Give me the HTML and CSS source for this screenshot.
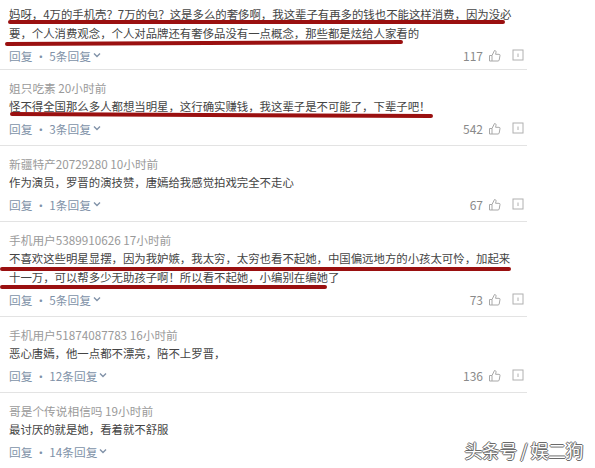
FILE: index.html
```html
<!DOCTYPE html>
<html lang="zh-CN">
<head>
  <meta charset="UTF-8" />
  <meta name="viewport" content="width=device-width, initial-scale=1.0"/>
  <title>评论</title>
  <link rel="stylesheet" href="styles.css">
</head>
<body>
  <div id="comment-list">

    <div class="comment comment-first">
      <p class="text">妈呀，4万的手机壳？7万的包？这是多么的奢侈啊，我这辈子有再多的钱也不能这样消费，因为没必<br>要，个人消费观念，个人对品牌还有奢侈品没有一点概念，那些都是炫给人家看的<i class="mark m1a"></i><i class="mark m1b"></i></p>
      <div class="foot">
        <span class="reply">回复 · 5条回复<svg class="chev" width="8" height="6" viewBox="0 0 8 6"><path d="M1 1.5 L4 4.5 L7 1.5" /></svg></span>
        <span class="stats">117<svg class="thumb" width="13" height="13" viewBox="0 0 13 13"><path d="M1.5 6.5h2.5v5.5H1.5z M4 6.5 L6.5 1.5 C7.6 1.5 8.2 2.2 8 3.2 L7.6 5.3 H11 C11.7 5.3 12.1 5.9 12 6.5 L11.2 11 C11.1 11.6 10.6 12 10 12 H4" /></svg><svg class="report" width="12" height="12" viewBox="0 0 12 12"><rect x="1" y="1" width="10" height="10" /><path d="M6 4.5v3.5" /></svg></span>
      </div>
    </div>

    <div class="comment">
      <div class="meta">姐只吃素 20小时前</div>
      <p class="text">怪不得全国那么多人都想当明星，这行确实赚钱，我这辈子是不可能了，下辈子吧！<i class="mark m2"></i></p>
      <div class="foot">
        <span class="reply">回复 · 3条回复<svg class="chev" width="8" height="6" viewBox="0 0 8 6"><path d="M1 1.5 L4 4.5 L7 1.5" /></svg></span>
        <span class="stats">542<svg class="thumb" width="13" height="13" viewBox="0 0 13 13"><path d="M1.5 6.5h2.5v5.5H1.5z M4 6.5 L6.5 1.5 C7.6 1.5 8.2 2.2 8 3.2 L7.6 5.3 H11 C11.7 5.3 12.1 5.9 12 6.5 L11.2 11 C11.1 11.6 10.6 12 10 12 H4" /></svg><svg class="report" width="12" height="12" viewBox="0 0 12 12"><rect x="1" y="1" width="10" height="10" /><path d="M6 4.5v3.5" /></svg></span>
      </div>
    </div>

    <div class="comment">
      <div class="meta">新疆特产20729280 10小时前</div>
      <p class="text">作为演员，罗晋的演技赞，唐嫣给我感觉拍戏完全不走心</p>
      <div class="foot">
        <span class="reply">回复 · 1条回复<svg class="chev" width="8" height="6" viewBox="0 0 8 6"><path d="M1 1.5 L4 4.5 L7 1.5" /></svg></span>
        <span class="stats">67<svg class="thumb" width="13" height="13" viewBox="0 0 13 13"><path d="M1.5 6.5h2.5v5.5H1.5z M4 6.5 L6.5 1.5 C7.6 1.5 8.2 2.2 8 3.2 L7.6 5.3 H11 C11.7 5.3 12.1 5.9 12 6.5 L11.2 11 C11.1 11.6 10.6 12 10 12 H4" /></svg><svg class="report" width="12" height="12" viewBox="0 0 12 12"><rect x="1" y="1" width="10" height="10" /><path d="M6 4.5v3.5" /></svg></span>
      </div>
    </div>

    <div class="comment">
      <div class="meta">手机用户5389910626 17小时前</div>
      <p class="text">不喜欢这些明星显摆，因为我妒嫉，我太穷，太穷也看不起她，中国偏远地方的小孩太可怜，加起来<br>十一万，可以帮多少无助孩子啊！所以看不起她，小编别在编她了<i class="mark m4a"></i><i class="mark m4b"></i></p>
      <div class="foot">
        <span class="reply">回复 · 5条回复<svg class="chev" width="8" height="6" viewBox="0 0 8 6"><path d="M1 1.5 L4 4.5 L7 1.5" /></svg></span>
        <span class="stats">73<svg class="thumb" width="13" height="13" viewBox="0 0 13 13"><path d="M1.5 6.5h2.5v5.5H1.5z M4 6.5 L6.5 1.5 C7.6 1.5 8.2 2.2 8 3.2 L7.6 5.3 H11 C11.7 5.3 12.1 5.9 12 6.5 L11.2 11 C11.1 11.6 10.6 12 10 12 H4" /></svg><svg class="report" width="12" height="12" viewBox="0 0 12 12"><rect x="1" y="1" width="10" height="10" /><path d="M6 4.5v3.5" /></svg></span>
      </div>
    </div>

    <div class="comment">
      <div class="meta">手机用户51874087783 16小时前</div>
      <p class="text">恶心唐嫣，他一点都不漂亮，陪不上罗晋，</p>
      <div class="foot">
        <span class="reply">回复 · 12条回复<svg class="chev" width="8" height="6" viewBox="0 0 8 6"><path d="M1 1.5 L4 4.5 L7 1.5" /></svg></span>
        <span class="stats">136<svg class="thumb" width="13" height="13" viewBox="0 0 13 13"><path d="M1.5 6.5h2.5v5.5H1.5z M4 6.5 L6.5 1.5 C7.6 1.5 8.2 2.2 8 3.2 L7.6 5.3 H11 C11.7 5.3 12.1 5.9 12 6.5 L11.2 11 C11.1 11.6 10.6 12 10 12 H4" /></svg><svg class="report" width="12" height="12" viewBox="0 0 12 12"><rect x="1" y="1" width="10" height="10" /><path d="M6 4.5v3.5" /></svg></span>
      </div>
    </div>

    <div class="comment comment-last">
      <div class="meta">哥是个传说相信吗 19小时前</div>
      <p class="text">最讨厌的就是她，看着就不舒服</p>
      <div class="foot">
        <span class="reply">回复 · 14条回复<svg class="chev" width="8" height="6" viewBox="0 0 8 6"><path d="M1 1.5 L4 4.5 L7 1.5" /></svg></span>
      </div>
    </div>

  </div>

  <div id="watermark">头条号 / 娱二狗</div>
</body>
</html>
```

FILE: styles.css
```css
body {
  margin: 0;
  background-color: #fff;
  font-family: "Noto Sans CJK SC", "Microsoft YaHei", sans-serif;
  font-size: 11.4px;
  color: #444;
  overflow: hidden;
}

#comment-list {
  width: 527px;
}

.comment {
  padding: 8px 0 7px 9px;
  border-bottom: 1px solid #e3e3e3;
}

.comment-first {
  padding-top: 5px;
  padding-bottom: 4px;
}

.comment-last {
  border-bottom: none;
}

.meta {
  line-height: 19px;
  font-size: 11.7px;
  color: #9a9a9a;
}

.text {
  position: relative;
  margin: 0;
  line-height: 19px;
  white-space: nowrap;
  color: #444;
}

.foot {
  display: flex;
  justify-content: space-between;
  align-items: center;
  height: 20px;
  margin-top: 2px;
  padding-right: 3px;
  font-size: 11.7px;
}

.reply {
  display: flex;
  align-items: center;
  color: #8192a8;
}

.chev {
  margin-left: 2px;
  fill: none;
  stroke: #8192a8;
  stroke-width: 1.4;
}

.stats {
  display: flex;
  align-items: center;
  gap: 5px;
  color: #8a8a8a;
  font-size: 12px;
}

.thumb {
  fill: none;
  stroke: #a8a8a8;
  stroke-width: 1;
  margin-right: 6px;
}

.report {
  fill: none;
  stroke: #b0b0b0;
  stroke-width: 1;
}

/* hand drawn red marks over the text */
.mark {
  position: absolute;
  height: 4px;
  border-radius: 2px;
  background-color: #9a1010;
}

.m1a { top: 15px; left: -1px; width: 497px; }
.m1b { top: 36px; left: -4px; width: 398px; transform: rotate(-0.3deg); }
.m2 { top: 16px; left: 1px; width: 423px; transform: rotate(0.3deg); }
.m4a { top: 18px; left: -9px; width: 511px; }
.m4b { top: 36px; left: -9px; width: 327px; }

#watermark {
  position: absolute;
  right: 12px;
  bottom: 5px;
  font-size: 18px;
  letter-spacing: -0.5px;
  color: #fff;
  text-shadow: 1px 0 0 #6a6a6a, -1px 0 0 #6a6a6a, 0 1px 0 #6a6a6a, 0 -1px 0 #6a6a6a;
}
```
